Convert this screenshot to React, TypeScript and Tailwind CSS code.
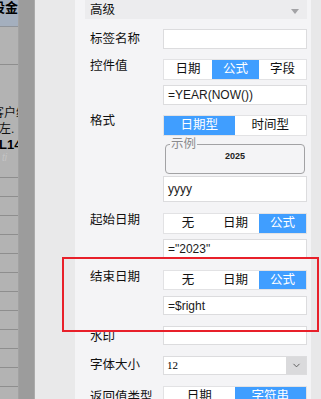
import { ChevronDown } from 'lucide-react';

const font = "font-['Liberation_Sans','Noto_Sans_CJK_SC',sans-serif]";

interface SegProps {
  items: string[];
  active: number;
  widths?: string[];
  h?: string;
}

function Seg({ items, active, widths, h = 'h-[21px]' }: SegProps) {
  return (
    <div className={`flex ${h} w-[144px] bg-white border border-[#e2e2e4]`}>
      {items.map((it, i) => (
        <div
          key={it}
          className={`${widths ? widths[i] : 'flex-1'} flex items-center justify-center text-[12.5px] ${
            i === active ? 'bg-[#409eff] text-white' : 'text-[#111]'
          }`}
        >
          {it}
        </div>
      ))}
    </div>
  );
}

function Input({ value, h = 'h-[20px]', className = '' }: { value?: string; h?: string; className?: string }) {
  return (
    <div className={`${h} w-[144px] bg-white border border-[#dcdcde] flex items-center pl-[4px] text-[12px] text-[#1a1a1a] ${className}`}>
      {value}
    </div>
  );
}

function Row({ label, labelClass, children, className = '' }: { label: string; labelClass: string; children: React.ReactNode; className?: string }) {
  return (
    <div className={`flex items-start ${className}`}>
      <div className={`w-[78px] pl-[5px] text-[12.5px] leading-[16px] text-[#111] whitespace-nowrap ${labelClass}`}>{label}</div>
      <div className="flex flex-col">{children}</div>
    </div>
  );
}

function Cells() {
  const lines = [178, 197, 216, 235, 254, 273, 292, 311, 330, 349, 368, 387];
  return (
    <div className="w-[19px] h-full bg-[#b3b3b3] border-r border-[#a2a2a2] overflow-hidden flex flex-col">
      <div className="h-[27px] bg-[#a4afbe] border-b border-[#8f9399] shrink-0 overflow-hidden">
        <div className="-ml-[8px] mt-[1px] text-[13px] font-bold leading-[14px] text-black whitespace-nowrap">设金额</div>
      </div>
      <div className="h-[38px] border-b border-[#8e8e8e] shrink-0" />
      <div className="h-[113px] border-b border-[#8e8e8e] shrink-0 overflow-hidden pt-[41px]">
        <div className="-ml-[8px] text-[12px] leading-[14px] text-[#111] whitespace-nowrap">客户续</div>
        <div className="-ml-[1px] mt-[2px] text-[12px] leading-[14px] text-[#111] whitespace-nowrap">左.</div>
        <div className="-ml-[1px] mt-[2px] text-[13px] font-bold leading-[14px] text-black whitespace-nowrap">L14</div>
        <div className="ml-[2px] text-[10px] italic leading-[12px] text-[#c4c4c4] whitespace-nowrap">ti</div>
      </div>
      {lines.slice(1).map((l) => (
        <div key={l} className="h-[19px] border-b border-[#8e8e8e] shrink-0" />
      ))}
    </div>
  );
}

export default function App() {
  return (
    <div className={`relative w-[321px] h-[399px] overflow-hidden flex bg-[#e9e9e9] ${font}`}>
      <Cells />
      <div className="w-[16px] h-full bg-[#9c9c9c] border-r border-[#ababab]" />
      <div className="w-[40px] h-full bg-[#e9e9ea]" />

      <div className="w-[236px] h-full bg-[#f4f4f6] pl-[10px] pr-[4px]">
        <div className="h-[19px] bg-[#ececee] flex items-center justify-between pl-[5px] pr-[8px]">
          <span className="text-[12.5px] leading-[16px] text-[#111]">高级</span>
          <svg width="8" height="5" viewBox="0 0 8 5" className="mt-[3px]">
            <polygon points="0,0 8,0 4,5" fill="#a3a3a6" />
          </svg>
        </div>

        <Row label="标签名称" labelClass="pt-[2px]" className="mt-[10px]">
          <Input />
        </Row>

        <Row label="控件值" labelClass="-mt-[1px]" className="mt-[10px]">
          <Seg items={['日期', '公式', '字段']} active={1} widths={['w-[48px]', 'w-[47px]', 'w-[47px]']} />
          <Input value="=YEAR(NOW())" className="mt-[5px]" />
        </Row>

        <Row label="格式" labelClass="-mt-[2px]" className="mt-[10px]">
          <Seg items={['日期型', '时间型']} active={0} widths={['w-[71px]', 'w-[72px]']} />
          <fieldset className="mt-[1px] ml-[2px] w-[140px] h-[37px] border border-[#a2a2a4] rounded-[4px] px-[4px]">
            <legend className="text-[12.5px] leading-[14px] text-[#8c8c8e] px-[1px]">示例</legend>
            <div className="text-center text-[9px] font-bold leading-[12px] text-[#222] -mt-[1px]">2025</div>
          </fieldset>
          <Input value="yyyy" h="h-[26px]" className="mt-[2px]" />
        </Row>

        <Row label="起始日期" labelClass="-mt-[1px]" className="mt-[11px]">
          <Seg items={['无', '日期', '公式']} active={2} widths={['w-[48px]', 'w-[47px]', 'w-[47px]']} />
          <Input value={'="2023"'} h="h-[19px]" className="mt-[5px]" />
        </Row>

        <Row label="结束日期" labelClass="-mt-[1px]" className="mt-[12px]">
          <Seg items={['无', '日期', '公式']} active={2} widths={['w-[48px]', 'w-[47px]', 'w-[47px]']} h="h-[20px]" />
          <Input value="=$right" h="h-[19px]" className="mt-[6px]" />
        </Row>

        <Row label="水印" labelClass="pt-[3px]" className="mt-[11px]">
          <Input h="h-[19px]" />
        </Row>

        <Row label="字体大小" labelClass="pt-[1px]" className="mt-[11px]">
          <div className="flex h-[19px] w-[144px] bg-white border border-[#dcdcde]">
            <div className="flex-1 flex items-center pl-[3px] text-[11px] font-['Liberation_Serif',serif] text-black">12</div>
            <div className="w-[20px] bg-[#dadadc] flex items-center justify-center">
              <ChevronDown size={11} strokeWidth={2} color="#555" />
            </div>
          </div>
        </Row>

        <Row label="返回值类型" labelClass="pt-[3px]" className="mt-[11px]">
          <Seg items={['日期', '字符串']} active={1} widths={['w-[71px]', 'w-[72px]']} h="h-[20px]" />
        </Row>
      </div>

      <div className="w-[10px] h-full bg-[#e8e8e9]" />

      <div className="absolute left-[62px] top-[257px] w-[257px] h-[75px] border-2 border-[#e8202a]" />
    </div>
  );
}
